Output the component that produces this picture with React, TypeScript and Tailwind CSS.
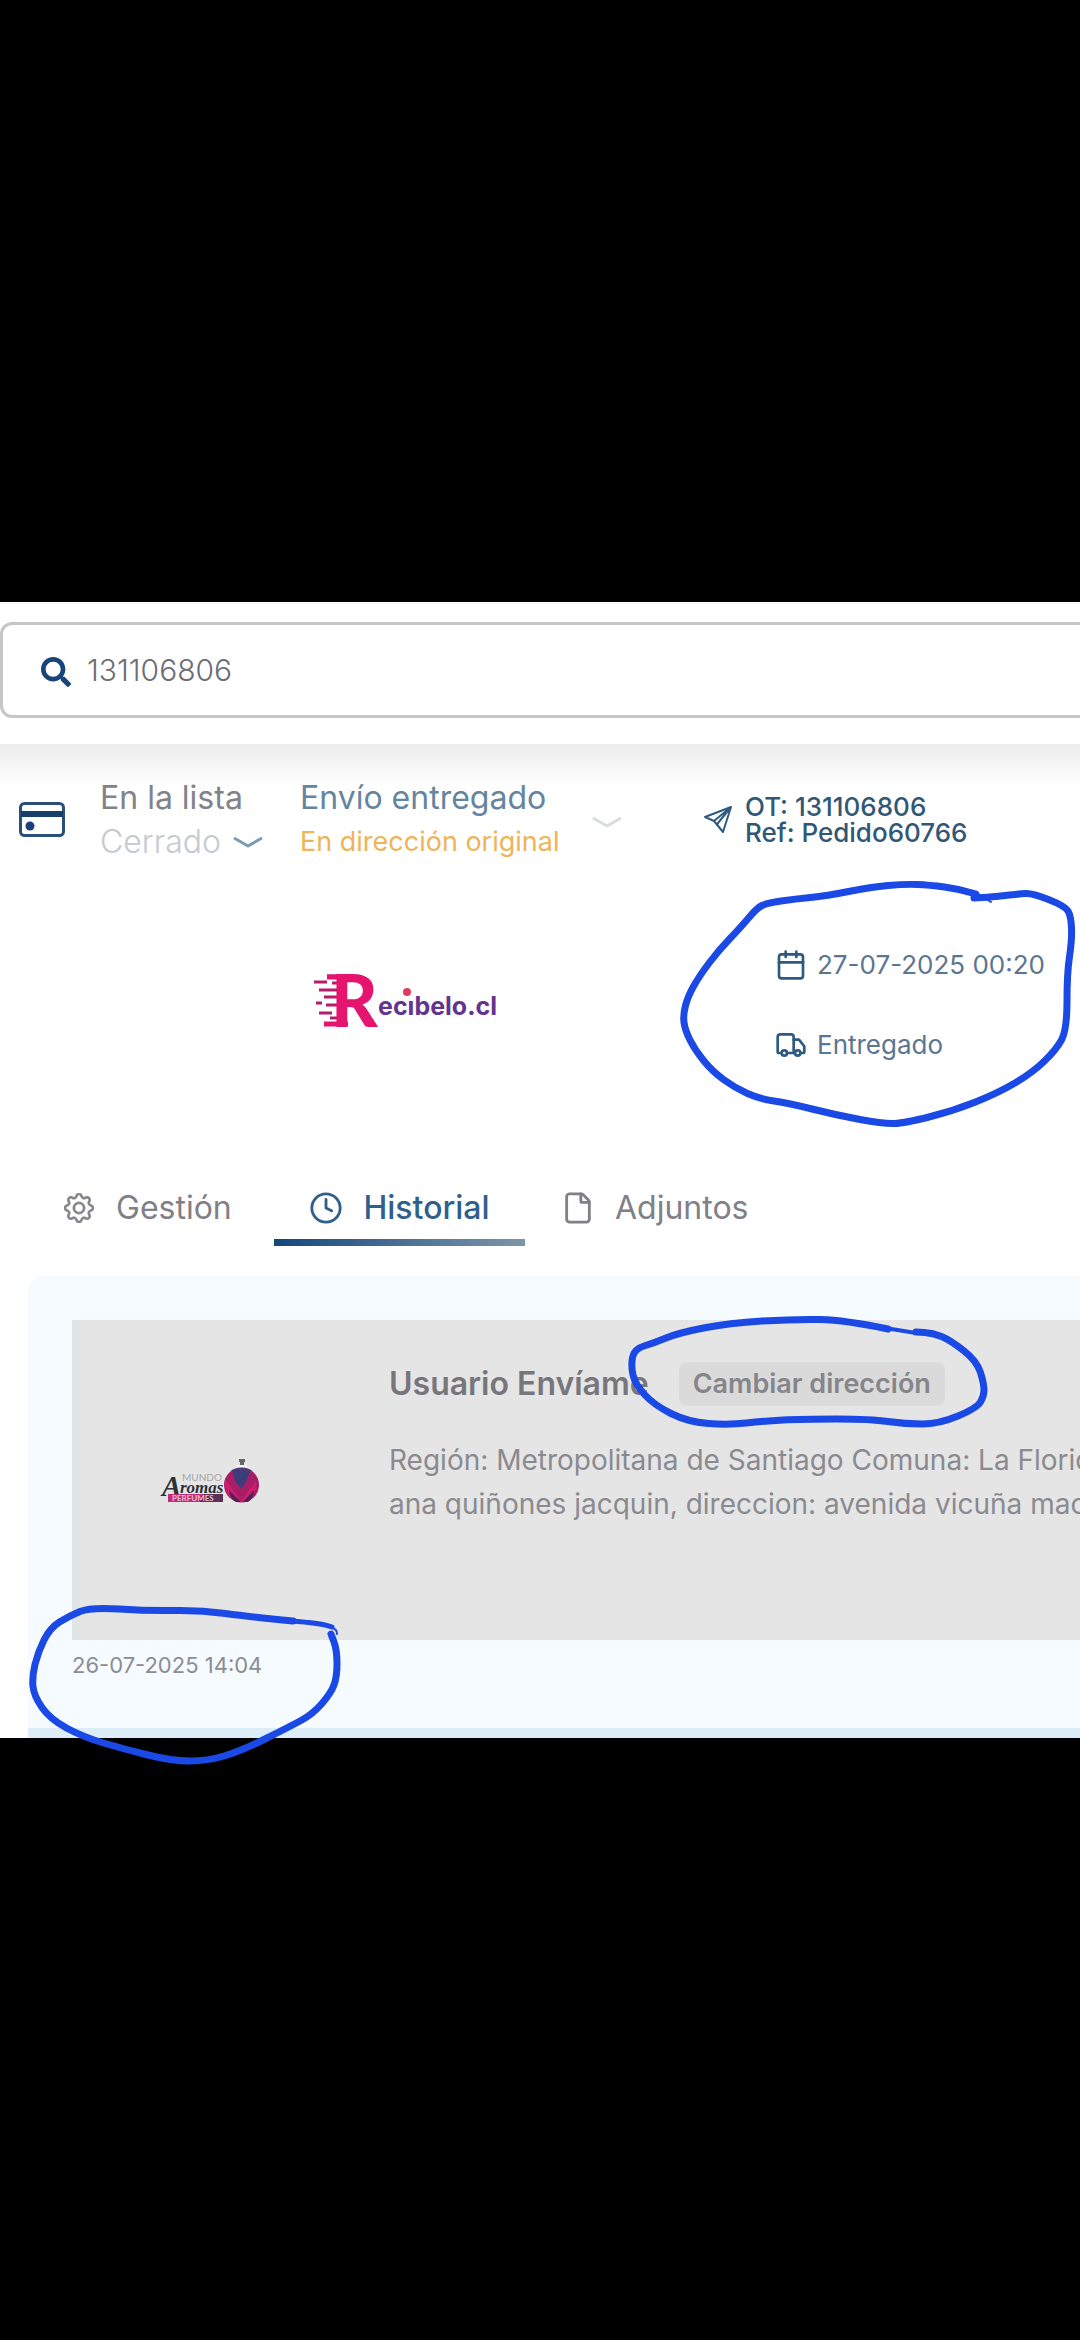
import clsx from 'clsx'
import { Calendar, Clock, File, Truck } from 'lucide-react'
import { BsGear } from 'react-icons/bs'
import { FaSearch } from 'react-icons/fa'

type Point = [number, number]

const tabs = [
  { label: 'Gestión', icon: <BsGear size={30} strokeWidth={0.4} />, className: 'w-[212px]' },
  { label: 'Historial', icon: <Clock size={34} />, className: 'w-[251px] justify-center', active: true },
  { label: 'Adjuntos', icon: <File size={34} />, className: 'w-[267px] pl-9' },
]

const strokes: Point[][] = [
  [
    [976, 894], [960, 889], [929, 885], [905, 884], [871, 887], [826, 896], [795, 899], [767, 903], [757, 908],
    [741, 927], [719, 950], [700, 975], [688, 996], [683, 1015], [685, 1030], [695, 1050], [712, 1071],
    [735, 1088], [760, 1099], [788, 1103], [836, 1115], [884, 1124], [905, 1123], [953, 1111], [998, 1093],
    [1032, 1073], [1056, 1050], [1067, 1030], [1067, 973], [1072, 940], [1071, 916], [1065, 906], [1032, 893],
    [1019, 894], [991, 897], [974, 898],
  ],
  [
    [888, 1329], [845, 1320], [795, 1319], [729, 1323], [678, 1333], [654, 1343], [634, 1349], [631, 1366],
    [635, 1384], [654, 1405], [688, 1422], [729, 1425], [764, 1421], [802, 1419], [871, 1419], [905, 1424],
    [939, 1424], [977, 1408], [984, 1396], [984, 1384], [977, 1361], [950, 1340], [933, 1333], [916, 1332],
  ],
  [
    [293, 1621], [251, 1617], [200, 1610], [148, 1611], [91, 1607], [69, 1616], [50, 1628], [38, 1652],
    [32, 1677], [34, 1696], [50, 1719], [83, 1737], [124, 1749], [172, 1761], [207, 1761], [241, 1751],
    [289, 1727], [313, 1714], [331, 1693], [337, 1677], [337, 1650], [331, 1634],
  ],
]

function smoothPath(points: Point[]) {
  const [first, ...rest] = points
  const curves = rest.slice(0, -1).map(([x, y], i) => {
    const [nx, ny] = rest[i + 1]
    return `Q${x} ${y} ${(x + nx) / 2} ${(y + ny) / 2}`
  })
  return `M${first.join(' ')} ${curves.join(' ')} L${points[points.length - 1].join(' ')}`
}

function Annotations() {
  return (
    <svg
      className="pointer-events-none absolute top-0 left-0"
      width="1080"
      height="2340"
      fill="none"
      stroke="#1b49e6"
      strokeLinecap="round"
      strokeLinejoin="round"
      aria-hidden="true"
    >
      {strokes.map((points, index) => (
        <path key={index} d={smoothPath(points)} strokeWidth="7" />
      ))}
      <path d="M960 889 Q978 893 991 902" strokeWidth="2" />
      <path d="M885 1328 L916 1333" strokeWidth="4" />
      <path d="M290 1621 Q322 1623 332 1627" strokeWidth="5" />
      <path d="M328 1626 Q338 1629 337 1634" strokeWidth="2" />
    </svg>
  )
}

function CardIcon() {
  return (
    <svg width="46" height="35" viewBox="0 0 46 35" fill="none" aria-hidden="true">
      <rect x="1.5" y="1.5" width="43" height="32" rx="4" stroke="#2a5078" strokeWidth="3" />
      <path d="M2 12h42" stroke="#174068" strokeWidth="6" />
      <circle cx="11" cy="24" r="4.500" fill="#1c3f7c" />
    </svg>
  )
}

function PlaneIcon({ className }: { className: string }) {
  return (
    <svg className={className} width="30" height="30" viewBox="0 0 30 30" fill="none" aria-hidden="true">
      <path
        d="M28 2L2 12l9 4 9 11zM28 2L11 16M28 2L15 18l-1 3"
        stroke="currentColor"
        strokeWidth="2"
        strokeLinejoin="round"
      />
    </svg>
  )
}

function WideChevron({ className }: { className: string }) {
  return (
    <svg className={className} width="30" height="13" viewBox="0 0 30 13" fill="none" aria-hidden="true">
      <path d="M1 2l14 8l14-8" stroke="currentColor" strokeWidth="3" strokeLinejoin="round" />
    </svg>
  )
}

function RecibeloLogo() {
  return (
    <svg width="200" height="60" viewBox="0 0 200 60" role="img" aria-label="Recibelo.cl">
      <path
        d="M15 6h14M2 12h13M20 13h9M7 20h22M12 27h17M4 33h6M14 35h15M7 43h13M18 48h11"
        stroke="#b51d6b"
        strokeWidth="3"
      />
      <path d="M15 7h24M12 54h24M30 5v50" stroke="#e5156f" strokeWidth="5" />
      <text x="19" y="57" fontFamily="Lato, sans-serif" fontWeight="900" fontSize="72" fill="#e5156f">
        R
      </text>
      <text x="66" y="45" fontFamily="Inter, sans-serif" fontWeight="700" fontSize="25" fill="#62348e">
        ecıbelo.cl
      </text>
      <circle cx="95" cy="22" r="4" fill="#e23a63" />
    </svg>
  )
}

function AromasLogo() {
  return (
    <svg width="100" height="48" viewBox="0 0 100 48" role="img" aria-label="Mundo Aromas Perfumes">
      <text x="22" y="23" fontFamily="Lato, sans-serif" fontSize="10" fill="#a3a5a6">
        MUNDO
      </text>
      <text x="2" y="38" fontFamily="Liberation Serif, serif" fontStyle="italic" fontWeight="700" fontSize="29" fill="#2c3138">
        A
      </text>
      <text x="20" y="35" fontFamily="Liberation Serif, serif" fontStyle="italic" fontWeight="700" fontSize="17" fill="#2c3138">
        romas
      </text>
      <rect x="8" y="36" width="55" height="8" fill="#c32c78" />
      <path d="M44 36h19v8H40z" fill="#5b3155" />
      <text x="12" y="43" fontFamily="Lato, sans-serif" fontWeight="700" fontSize="8" fill="#edb9d2">
        PERFUMES
      </text>
      <path d="M79 1h6v3h-1v3h-4V4h-1z" fill="#66676b" />
      <path d="M76 8h11" stroke="#f5f5f5" strokeWidth="2" />
      <circle cx="81.500" cy="27" r="17.500" fill="#a91d67" />
      <path d="M72 12q9-4 19 0l-5 12-5 7-6-8z" fill="#3c3e7c" />
      <path d="M65 21l16 22 15-20q1 10-5 16l-6 5h-8q-13-7-12-23z" fill="#d01c6c" />
      <path d="M69 32l12 12h-5q-6-3-7-12zM94 32l-11 12h5q6-4 6-12z" fill="#542155" />
    </svg>
  )
}

function SearchBar() {
  return (
    <header className="border-t-2 border-gray-50 bg-white pt-[18px] pb-[26px]">
      <label className="-mr-4 flex h-[96px] items-center gap-4 rounded-xl border-3 border-[#c6c6c6] pl-[38px]">
        <FaSearch className="mt-1" size={30} color="#174578" aria-hidden="true" />
        <input
          className="h-12 min-w-0 flex-1 text-[30px] font-light text-[#6d6d73] outline-none"
          aria-label="Buscar"
          defaultValue="131106806"
        />
      </label>
    </header>
  )
}

function ShipmentStatus() {
  return (
    <section className="flex items-start bg-linear-to-b from-[#ececec] to-white to-35% pt-8">
      <div className="w-[100px] shrink-0 pt-[26px] pl-[19px]">
        <CardIcon />
      </div>
      <div className="w-[200px] shrink-0">
        <p className="text-[32px] leading-[44px] text-[#828288]">En la lista</p>
        <button className="flex items-center gap-3 text-[32px] leading-[44px] font-light text-[#c5c9d0]">
          Cerrado
          <WideChevron className="text-[#7d9bb0]" />
        </button>
      </div>
      <div className="w-[292px] shrink-0">
        <p className="text-[32px] leading-[44px] text-[#6485a0]">Envío entregado</p>
        <p className="text-[27px] leading-[44px] text-[#eeb457]">En dirección original</p>
      </div>
      <button className="w-[111px] shrink-0 pt-10" aria-label="Ver detalle">
        <WideChevron className="text-[#d9dcde]" />
      </button>
      <PlaneIcon className="mt-[29px] mr-3 shrink-0 text-[#2f5a80]" />
      <p className="pt-[18px] text-[26px] leading-[26px] font-medium whitespace-nowrap text-[#315777]">
        OT: 131106806
        <br />
        Ref: Pedido60766
      </p>
    </section>
  )
}

function Delivery() {
  return (
    <section className="flex pt-[81px] pb-[105px]">
      <div className="w-[775px] shrink-0 pt-[25px] pl-[312px]">
        <RecibeloLogo />
      </div>
      <div className="flex flex-col gap-10 text-[26px] leading-10 whitespace-nowrap text-[#5b7690]">
        <p className="flex items-center gap-[10px]">
          <Calendar className="text-[#2f5a80]" size={32} />
          27-07-2025 00:20
        </p>
        <p className="flex items-center gap-[10px]">
          <Truck className="text-[#2f5a80]" size={32} />
          Entregado
        </p>
      </div>
    </section>
  )
}

function Tabs() {
  return (
    <nav className="flex pl-[62px]">
      {tabs.map(({ label, icon, className, active }) => (
        <button
          key={label}
          className={clsx(
            'relative flex h-[76px] items-center gap-5 text-[32px]',
            active ? 'font-medium text-[#315f8c]' : 'text-[#808086]',
            className
          )}
        >
          <span className="flex w-[34px] justify-center">{icon}</span>
          {label}
          {active && <span className="absolute inset-x-0 bottom-0 h-[7px] bg-linear-to-r from-[#12477c] to-[#7d96a8]" />}
        </button>
      ))}
    </nav>
  )
}

function History() {
  return (
    <section className="mt-[30px] ml-7 rounded-tl-2xl bg-[#f5fbff] pt-11 pl-11">
      <article className="flex h-[320px] border-l-8 border-[#dfe5e5] bg-[#e5e5e5]">
        <div className="w-[309px] shrink-0 pt-[138px] pl-20">
          <AromasLogo />
        </div>
        <div className="min-w-0 flex-1 overflow-hidden pt-[42px]">
          <div className="flex items-center gap-[30px] leading-[44px] whitespace-nowrap">
            <h2 className="text-[32px] font-semibold text-[#76767c]">Usuario Envíame</h2>
            <span className="rounded-lg bg-[#dadada] px-3.5 text-[27px] font-semibold text-[#85858a]">
              Cambiar dirección
            </span>
          </div>
          <p className="mt-8 text-[28px] leading-[44px] whitespace-nowrap text-[#8a8a90]">
            Región: Metropolitana de Santiago Comuna: La Florida
            <br />
            ana quiñones jacquin, direccion: avenida vicuña mackenna
          </p>
        </div>
      </article>
      <time className="block pt-2 pb-[46px] text-[22px] leading-[34px] text-[#8c8c92]">26-07-2025 14:04</time>
      <div className="-ml-11 h-[10px] bg-[#dcedf8]" />
    </section>
  )
}

export default function App() {
  return (
    <div className="relative min-h-screen overflow-hidden bg-black pt-[602px] pb-[602px] font-[Inter,sans-serif]">
      <main className="bg-white">
        <SearchBar />
        <ShipmentStatus />
        <Delivery />
        <Tabs />
        <History />
      </main>
      <Annotations />
    </div>
  )
}
